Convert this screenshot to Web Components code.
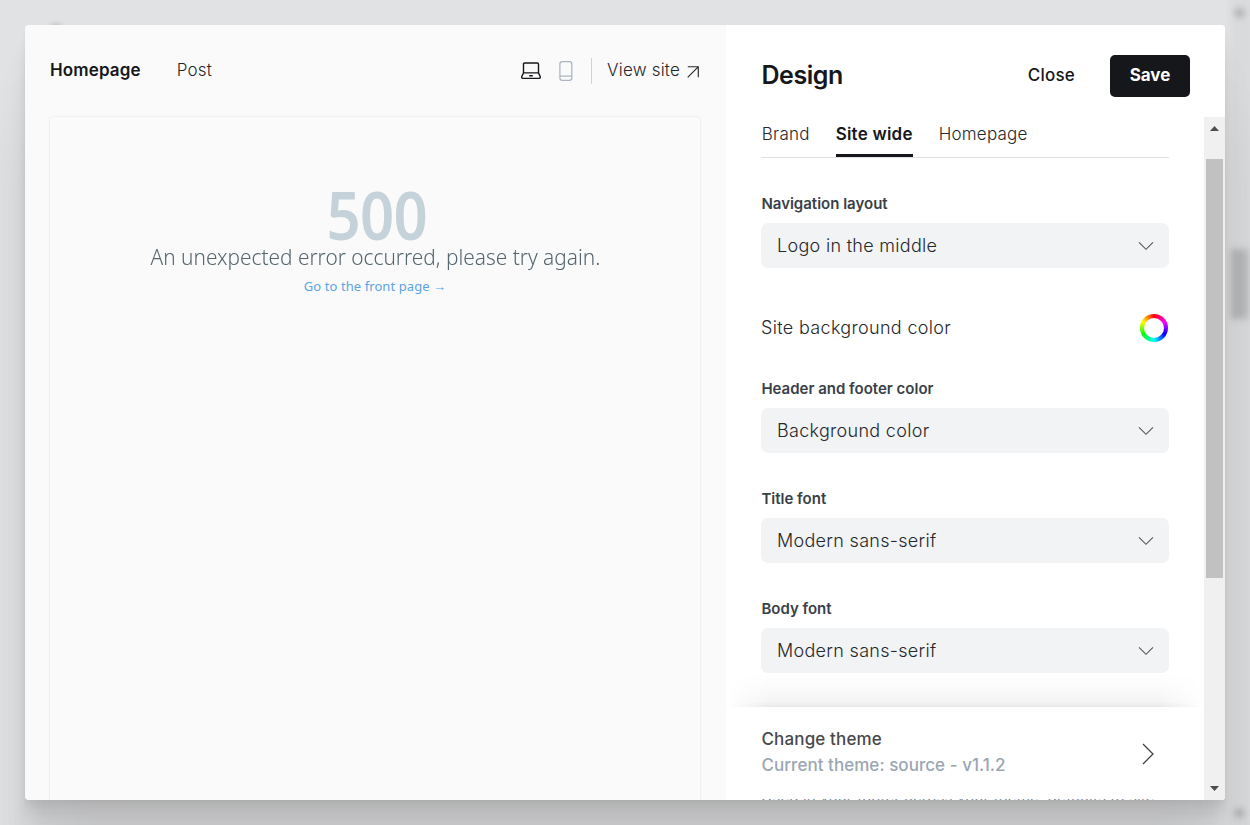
<!DOCTYPE html>
<html lang="en">
<head>
<meta charset="utf-8">
<title>Design settings</title>
<style>
html,body{margin:0;height:100%;overflow:hidden}
body{font-family:Inter,"Liberation Sans",sans-serif;color:#15171a;background:#e1e2e4}
</style>
</head>
<body>
<design-modal></design-modal>
<script>
const define = (name, html) => customElements.define(name, class extends HTMLElement {
  constructor() {
    super();
    const t = document.createElement('template');
    t.innerHTML = html;
    this.attachShadow({mode: 'open'}).append(t.content.cloneNode(true));
  }
});

define('tab-item', `<style>
:host{display:block;font-size:17px;line-height:24px;font-weight:300;letter-spacing:.2px;color:#26282b;white-space:nowrap}
:host([active]){font-weight:600;letter-spacing:.13px;color:#15171a}
</style><slot></slot>`);

define('preview-toolbar', `<style>
:host{display:flex;align-items:center;height:91px;padding:0 27px 0 25px;box-sizing:border-box}
nav{display:flex;gap:36px;flex:1}
.tools{display:flex;align-items:center}
svg{display:block}
tab-item{margin-top:-1px}
.laptop{margin:1px 18px 0 0}
.phone{margin-top:1px}
.rule{width:1px;height:26px;background:#ced4d9;margin:1px 15px 0 18px}
.view{display:flex;align-items:center;gap:7px}
.view svg{margin-top:2px}
</style>
<nav><tab-item active>Homepage</tab-item><tab-item>Post</tab-item></nav>
<div class="tools">
<svg class="laptop" width="20" height="18" viewBox="0 0 20 18" fill="none" stroke="#15171a" stroke-width="1.4" stroke-linejoin="round" stroke-linecap="round"><path d="M2.5 10.5V2.2Q2.5 1 3.7 1H16.3Q17.5 1 17.5 2.2V10.5M2.5 10.9H17.5L19.3 14.7Q19.5 16.4 18.2 16.4H1.8Q.5 16.4.7 14.7Z"/><path d="M8.7 13.7H11.3"/></svg>
<svg class="phone" width="14" height="20" viewBox="0 0 14 20" fill="none" stroke="#abb4be" stroke-width="1.25"><rect x=".9" y=".7" width="11.9" height="18.6" rx="2.3"/><path d="M1 15H13"/></svg>
<div class="rule"></div>
<div class="view"><tab-item>View site</tab-item>
<svg width="12" height="12" viewBox="0 0 12 12" fill="none" stroke="#26282b" stroke-width="1.15"><path d="M.7 11.3L11.2.8M.8.7H11.3V11.3"/></svg></div>
</div>`);

define('site-preview', `<style>
:host{display:flex;flex-direction:column;align-items:center;box-sizing:border-box;flex:1;margin:0 25px 0 24px;padding-top:72px;border:1px solid #f0f0f1;border-bottom:0;border-radius:5px 5px 0 0;box-shadow:0 0 4px rgba(0,0,0,.025);font-family:"Noto Sans","Open Sans",sans-serif;overflow:hidden;white-space:nowrap}
.code{font-size:66.5px;line-height:50px;font-weight:600;letter-spacing:-.9px;color:#c5d2d9;transform:scaleX(.9);margin-left:4px}
.message{font-size:22px;line-height:28px;font-weight:300;color:#54666d;margin-top:3px;transform:scaleX(.947)}
a{font-size:13px;line-height:20px;color:#5ba4e5;text-decoration:none;margin-top:6px;letter-spacing:.08px}
</style>
<div class="code">500</div>
<div class="message">An unexpected error occurred, please try again.</div>
<a>Go to the front page →</a>`);

define('select-field', `<style>
:host{display:block}
label{display:block;font-size:15px;line-height:20px;font-weight:600;color:#394047;padding-left:.4px}
.control{display:flex;align-items:center;justify-content:space-between;height:45px;box-sizing:border-box;margin-top:9px;padding:0 15px 0 16px;background:#f1f3f4;border-radius:7px;font-size:18px;letter-spacing:.3px;font-weight:300;color:#26282b}
</style>
<label><slot name="label"></slot></label>
<div class="control"><span><slot></slot></span><svg width="16" height="10" viewBox="0 0 16 10" fill="none" stroke="#55585b" stroke-width="1.1"><path d="M1 1.3L8 8.3L15 1.3"/></svg></div>`);

define('color-field', `<style>
:host{display:flex;align-items:center;justify-content:space-between;height:30px;font-size:18px;letter-spacing:.33px;font-weight:300;color:#26282b;padding-right:1px}
span{margin-top:-2px}
i{width:28px;height:28px;border-radius:50%;background:conic-gradient(#f00,#f0f,#00f,#0ff,#0f0,#ff0,#f00);display:grid;place-items:center}
i::after{content:"";width:20px;height:20px;border-radius:50%;background:#fff}
</style><span><slot></slot></span><i></i>`);

define('panel-header', `<style>
:host{display:flex;align-items:center;height:92px;box-sizing:border-box;padding:9px 35px 0 35.5px}
h2{margin:-2px 0 0;flex:1;font-size:25px;line-height:32px;font-weight:600;letter-spacing:-.45px}
.close{font-size:17px;font-weight:500;margin:-2px 35px 0 0;letter-spacing:.2px}
.save{width:80px;height:42px;line-height:41px;text-align:center;border-radius:5px;background:#15171a;color:#fff;font-size:17px;font-weight:700}
</style><h2>Design</h2><span class="close">Close</span><span class="save">Save</span>`);

define('scroll-rail', `<style>
:host{display:flex;flex-direction:column;align-items:center;width:21px;box-sizing:border-box;padding:9px 1px 9px 0;background:#f0f0f0}
.thumb{width:17px;height:419px;margin-top:28px;background:#c1c1c1}
svg{display:block}.down{margin-top:auto}
</style>
<svg width="9" height="5" viewBox="0 0 9 5"><path d="M0 5L4.5 0L9 5Z" fill="#4d4d4d"/></svg>
<div class="thumb"></div>
<svg class="down" width="9" height="5" viewBox="0 0 9 5"><path d="M0 0L4.5 5L9 0Z" fill="#4d4d4d"/></svg>`);

define('theme-bar', `<style>
:host{position:absolute;left:0;right:0;bottom:1px;height:92px;box-sizing:border-box;display:flex;align-items:center;justify-content:space-between;padding:0 50px 0 35.5px;background:#fff}
:host::before{content:"";position:absolute;left:0;right:0;bottom:100%;height:34px;-webkit-mask:linear-gradient(90deg,transparent,#000 45px,#000 calc(100% - 45px),transparent);mask:linear-gradient(90deg,transparent,#000 45px,#000 calc(100% - 45px),transparent);background:linear-gradient(0deg,rgba(0,0,0,.09),rgba(0,0,0,.045) 5px,rgba(0,0,0,.02) 17px,transparent)}
div{font-size:17px;line-height:26px;font-weight:500;letter-spacing:.04px;white-space:nowrap}
.text{margin-top:-3px}
svg{margin-top:1px}
.name{color:#47494c;letter-spacing:.14px}.current{color:#9aa6b2}
</style>
<div class="text"><div class="name">Change theme</div><div class="current">Current theme: source - v1.1.2</div></div>
<svg width="12" height="22" viewBox="0 0 12 22" fill="none" stroke="#3c3e41" stroke-width="1.25"><path d="M1 1L11 11L1 21"/></svg>`);

define('settings-panel', `<style>
:host{display:flex;flex-direction:column;width:499px;background:#fff}
.body{display:flex;flex:1;min-height:0}
.content{position:relative;flex:1;overflow:hidden;padding:0 35px}
nav{display:flex;gap:26px;height:41px;box-sizing:border-box;border-bottom:1px solid #dfe1e3;padding-top:5px}
nav tab-item{letter-spacing:.22px;padding-left:.8px}
nav tab-item[active]{height:32px;border-bottom:3px solid #15171a;letter-spacing:.22px;padding-left:0}
nav tab-item:last-child{padding-left:0}
.fields{display:flex;flex-direction:column}
.f1{margin-top:36px}.bg{margin-top:45px}.f2{margin-top:36px}.f3{margin-top:36px}
.hint{font-size:15px;line-height:20px;letter-spacing:.16px;color:#7c8b9a;margin-top:114px;white-space:nowrap}
</style>
<panel-header></panel-header>
<div class="body"><div class="content">
<nav><tab-item>Brand</tab-item><tab-item active>Site wide</tab-item><tab-item>Homepage</tab-item></nav>
<div class="fields">
<select-field class="f1"><span slot="label">Navigation layout</span>Logo in the middle</select-field>
<color-field class="bg">Site background color</color-field>
<select-field class="f2"><span slot="label">Header and footer color</span>Background color</select-field>
<select-field class="f3"><span slot="label">Title font</span>Modern sans-serif</select-field>
<select-field class="f3"><span slot="label">Body font</span>Modern sans-serif</select-field>
<div class="hint">Used in your footer across your theme, defaults to site</div>
</div>
<theme-bar></theme-bar>
</div><scroll-rail></scroll-rail></div>`);

define('design-modal', `<style>
:host{display:block;position:relative;height:100vh;box-sizing:border-box;padding:25px;overflow:hidden;background:#e1e2e4}
.blur{position:absolute;filter:blur(3px);background:#8f9193}
.track{right:-4px;top:-6px;width:24px;height:840px;background:#d9dadc}
.thumb{right:2px;top:249px;width:17px;height:70px;background:#b6b7b9}
.dot{right:6px;width:9px;height:8px;opacity:.6}
.top{top:9px}.bottom{bottom:8px}
.mark{left:52px;top:26px;width:8px;height:8px}
.modal{position:relative;display:flex;height:775px;border-radius:4px;overflow:hidden;background:#fafafa}
.shade{position:relative;border-radius:4px;box-shadow:0 2.8px 2.2px rgba(0,0,0,.02),0 6.7px 5.3px rgba(0,0,0,.028),0 12.5px 10px rgba(0,0,0,.035),0 22.3px 17.9px rgba(0,0,0,.042),0 41.8px 33.4px rgba(0,0,0,.05),0 100px 80px rgba(0,0,0,.07)}
.left{width:701px;display:flex;flex-direction:column}
</style>
<div class="blur track"></div><div class="blur thumb"></div><div class="blur dot top"></div><div class="blur dot bottom"></div><div class="blur mark"></div>
<div class="shade"><div class="modal"><div class="left"><preview-toolbar></preview-toolbar><site-preview></site-preview></div><settings-panel></settings-panel></div></div>`);
</script>
</body>
</html>
